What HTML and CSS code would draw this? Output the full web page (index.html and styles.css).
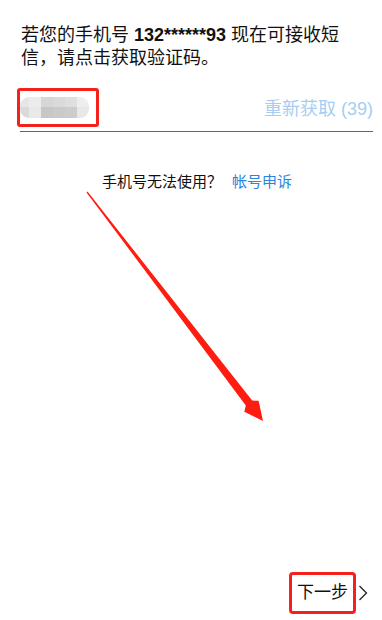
FILE: index.html
```html
<!DOCTYPE html>
<html lang="zh-CN">
<head>
<meta charset="utf-8">
<title>验证手机号</title>
<link rel="stylesheet" href="styles.css">
</head>
<body>
<div class="page">
  <p class="intro">若您的手机号 <b class="phone">132******93</b> 现在可接收短信，请点击获取验证码。</p>
  <div class="field">
    <div class="mark-box">
      <div class="mosaic">
        <i class="m1a"></i><i class="m2a"></i><i class="m3a"></i><i class="m4a"></i><i class="m5a"></i><i class="m6a"></i>
        <i class="m1b"></i><i class="m2b"></i><i class="m3b"></i><i class="m4b"></i><i class="m5b"></i><i class="m6b"></i>
      </div>
    </div>
    <span class="resend">重新获取 (39)</span>
  </div>
  <div class="help">
    <span class="help-text">手机号无法使用？</span><a class="help-link">帐号申诉</a>
  </div>
  <div class="footer">
    <span class="next-box">下一步</span>
    <svg class="chevron" width="10" height="16" viewBox="0 0 10 16"><polyline points="1.5,1 8.5,8 1.5,15" fill="none" stroke="#222" stroke-width="1.3"/></svg>
  </div>
  <svg class="arrow" width="382" height="620" viewBox="0 0 382 620">
    <polygon fill="#fe1d10" points="87.5,191.6 252.2,400.6 258.6,400.7 263,421 244.3,411.7 245.8,405.4 86.5,192.4"/>
  </svg>
</div>
</body>
</html>
```
FILE: styles.css
```css
html, body {
  margin: 0;
  padding: 0;
  background: #fff;
}
body {
  font-family: "Liberation Sans", "Noto Sans CJK SC", sans-serif;
  color: #111;
}
.page {
  position: relative;
  height: 620px;
  display: flex;
  flex-direction: column;
  overflow: hidden;
}
.intro {
  margin: 0;
  padding: 24px 20px 0 21px;
  font-size: 18px;
  line-height: 23px;
  color: #111;
}
.phone {
  font-weight: bold;
}
.field {
  display: flex;
  justify-content: space-between;
  align-items: flex-start;
  margin: 16px 9px 0 20px;
  height: 45px;
  border-bottom: 1px solid #666;
}
.mark-box {
  box-sizing: border-box;
  width: 82px;
  height: 39px;
  margin: 2px 0 0 -3px;
  padding-top: 6px;
  border: 3px solid #f5211b;
  border-radius: 3px;
}
.mosaic {
  display: grid;
  grid-template-columns: 9px 12px 12px 12px 12px 12px;
  grid-template-rows: 10px 11px;
  width: 69px;
  border-radius: 9px;
  overflow: hidden;
  filter: blur(0.6px);
}
.mosaic i { display: block; }
.m1a { background: #e6e6e6; }
.m2a { background: #ececec; }
.m3a { background: #d6d6d6; }
.m4a { background: #dadada; }
.m5a { background: #dfdfdf; }
.m6a { background: #eeeeee; }
.m1b { background: #dadada; }
.m2b { background: #e9e9e9; }
.m3b { background: #c7c7c7; }
.m4b { background: #cacaca; }
.m5b { background: #cccccc; }
.m6b { background: #e8e8e8; }
.resend {
  align-self: center;
  font-size: 18px;
  line-height: 24px;
  color: #a6cdf4;
}
.help {
  display: flex;
  justify-content: center;
  margin-top: 40px;
  padding-left: 12px;
  font-size: 15px;
  line-height: 20px;
}
.help-text {
  color: #111;
  margin-right: 10px;
}
.help-link {
  color: #2a84e0;
}
.footer {
  margin-top: auto;
  display: flex;
  justify-content: flex-end;
  align-items: center;
  padding: 0 14px 6px 0;
}
.next-box {
  box-sizing: border-box;
  height: 42px;
  padding: 0 5px;
  border: 3px solid #f5211b;
  border-radius: 4px;
  font-size: 17px;
  line-height: 36px;
  color: #111;
}
.chevron {
  margin-left: 2px;
  display: block;
}
.arrow {
  position: absolute;
  left: 0;
  top: 0;
  pointer-events: none;
}
```
